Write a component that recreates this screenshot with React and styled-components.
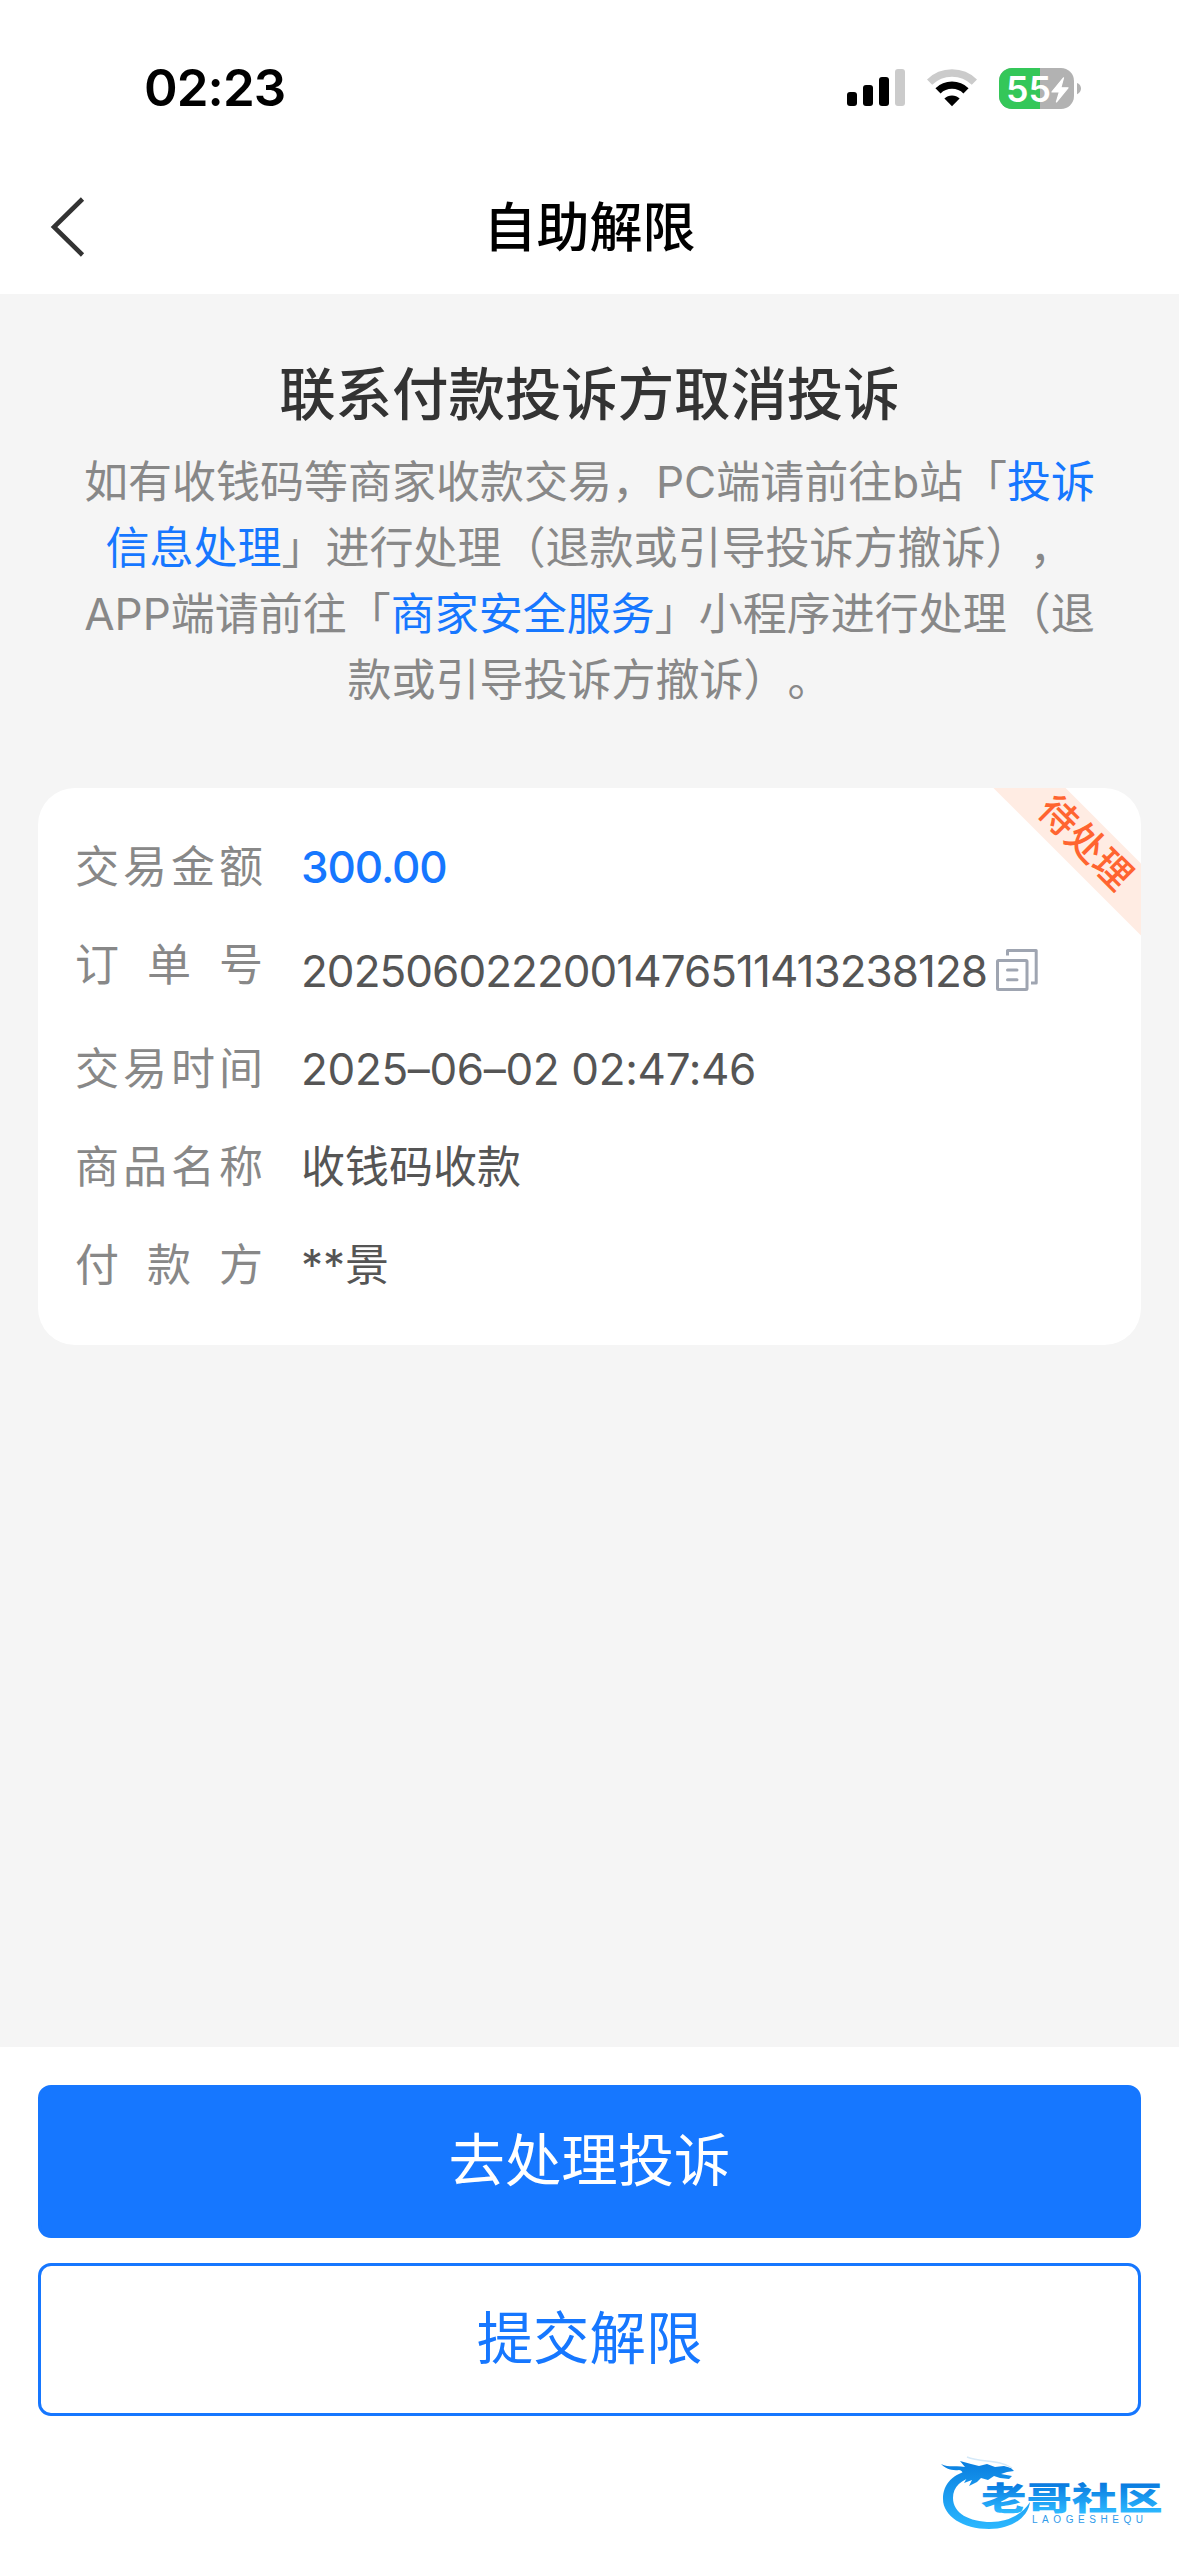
import React from "react";
import styled, { createGlobalStyle } from "styled-components";

const details = [
    { label: "交易金额", value: "300.00", highlight: true, tracking: -1.1 },
    {
        label: "订单号",
        value: "2025060222001476511413238128",
        copy: true,
        tracking: -0.97,
    },
    { label: "交易时间", value: "2025–06–02 02:47:46", tracking: -0.35 },
    { label: "商品名称", value: "收钱码收款" },
    { label: "付款方", value: "**景" },
];

const SignalIcon = () => (
    <svg width="58" height="38" viewBox="0 0 58 38">
        <rect x="0" y="23" width="10" height="14" rx="3" />
        <rect x="16" y="16" width="10" height="21" rx="3" />
        <rect x="32" y="8" width="10" height="29" rx="3" />
        <rect x="48" y="0" width="10" height="37" rx="3" fill="#cbcbcb" />
    </svg>
);

const WifiIcon = () => (
    <svg width="52" height="38" viewBox="0 0 52 38">
        <path
            d="M3.6 13.2A32 32 0 0 1 48.4 13.2"
            fill="none"
            stroke="#cbcbcb"
            strokeWidth="7.4"
        />
        <path
            d="M12 21.8A20.2 20.2 0 0 1 40 21.8"
            fill="none"
            stroke="#000"
            strokeWidth="7.4"
        />
        <path d="M26 37.2L18.4 29.6A10.8 10.8 0 0 1 33.6 29.6Z" />
    </svg>
);

const BatteryIcon = () => (
    <svg width="82" height="41" viewBox="0 0 82 41">
        <clipPath id="battery">
            <rect width="75" height="41" rx="13" />
        </clipPath>
        <g clipPath="url(#battery)">
            <rect width="75" height="41" fill="#b2b2b2" />
            <rect width="41" height="41" fill="#34c759" />
        </g>
        <path d="M78 15c2.4.8 4 3 4 5.6s-1.6 4.8-4 5.6z" fill="#b2b2b2" />
        <text
            x="7"
            y="34"
            fill="#fff"
            fontFamily="Inter"
            fontWeight="600"
            fontSize="35.5"
            textLength="45"
            lengthAdjust="spacingAndGlyphs">
            55
        </text>
        <path
            d="M64.5 9.8L53 24h7.4L57.4 34L69 19.8H61.8z"
            fill="#fff"
            stroke="#fff"
            strokeWidth="1.2"
            strokeLinejoin="round"
        />
    </svg>
);

const BackIcon = () => (
    <svg width="34" height="56" viewBox="0 0 34 56">
        <path
            d="M31.5 0L3 28L31.5 56"
            fill="none"
            stroke="#333"
            strokeWidth="4.6"
        />
    </svg>
);

const CopyIcon = () => (
    <svg width="42" height="42" viewBox="0 0 42 42" fill="none" stroke="#9fa5b1">
        <rect x="1.5" y="11.5" width="29.5" height="29" rx="1" strokeWidth="3" />
        <path
            d="M11.5 6.5V1.5H40.2V34H35"
            strokeWidth="3"
            strokeLinejoin="round"
        />
        <path d="M11.5 21H21M11.5 30.7H21" strokeWidth="3" strokeLinecap="round" />
    </svg>
);

const CommunityLogo = () => (
    <svg width="226" height="78" viewBox="0 0 226 78">
        <defs>
            <linearGradient id="ring" x1="0" y1="8" x2="0" y2="75" gradientUnits="userSpaceOnUse">
                <stop offset="0" stopColor="#0a7fe0" />
                <stop offset="1" stopColor="#2cb8ff" />
            </linearGradient>
            <linearGradient id="word" x1="0" y1="-27" x2="0" y2="3" gradientUnits="userSpaceOnUse">
                <stop offset="0" stopColor="#0878de" />
                <stop offset="1" stopColor="#2cb8ff" />
            </linearGradient>
        </defs>
        <g fill="url(#ring)">
            <path d="M31 16C12 19 2 30 2 45C2 62 22 75 48 75C70 75 87 64 89 48C81 61 66 68 50 68C28 68 12 59 12 44C12 33 20 25 35 22Z" />
            <path d="M0 10C8 14 16 11 24 13L19 7L30 10L38 12L46 10L54 13L63 12L70 14L73 17L66 18L60 20L71 22L68 25L59 24L53 22L47 26L40 24L36 28L28 32L31 26L23 29L27 22C19 22 24 17 18 16C10 17 4 14 0 10Z" />
        </g>
        <path d="M26 3C40 9 58 5 71 14" fill="none" stroke="#d5e9f8" strokeWidth="1.5" />
        <text
            transform="translate(40 55.5) scale(1.42 1)"
            fill="url(#word)"
            fontFamily="Noto Sans CJK SC"
            fontWeight="900"
            fontSize="32">
            老哥社区
        </text>
        <text
            x="91"
            y="69"
            fill="#2f9bea"
            fontFamily="Liberation Sans"
            fontSize="10"
            textLength="111">
            LAOGESHEQU
        </text>
    </svg>
);

const App = () => {
    return (
        <Page>
            <GlobalStyle />
            <StatusBar>
                <Clock>02:23</Clock>
                <StatusIcons>
                    <SignalIcon />
                    <WifiIcon />
                    <BatteryIcon />
                </StatusIcons>
            </StatusBar>
            <NavBar>
                <NavSide>
                    <BackIcon />
                </NavSide>
                <NavTitle>自助解限</NavTitle>
                <NavSide />
            </NavBar>
            <Content>
                <Heading>联系付款投诉方取消投诉</Heading>
                <Notice>
                    如有收钱码等商家收款交易，PC端请前往b站「<Anchor>投诉</Anchor>
                    <br />
                    <Anchor>信息处理</Anchor>」进行处理（退款或引导投诉方撤诉），
                    <br />
                    APP端请前往「<Anchor>商家安全服务</Anchor>」小程序进行处理（退
                    <br />
                    款或引导投诉方撤诉）。
                </Notice>
                <Card>
                    {details.map((item) => (
                        <Row key={item.label} $tall={item.copy}>
                            <Label>
                                {item.label.split("").map((char) => (
                                    <span key={char}>{char}</span>
                                ))}
                            </Label>
                            <Value
                                $highlight={item.highlight}
                                $lowered={item.copy}
                                $tracking={item.tracking}>
                                {item.value}
                                {item.copy && <CopyIcon />}
                            </Value>
                        </Row>
                    ))}
                    <Ribbon>待处理</Ribbon>
                </Card>
            </Content>
            <Footer>
                <ActionButton $primary>去处理投诉</ActionButton>
                <ActionButton>提交解限</ActionButton>
                <Watermark>
                    <CommunityLogo />
                </Watermark>
            </Footer>
        </Page>
    );
};

export default App;

const GlobalStyle = createGlobalStyle`
    * {
        box-sizing: border-box;
    }
    body {
        margin: 0;
        background: #fff;
    }
    svg {
        display: block;
        flex-shrink: 0;
        overflow: visible;
    }
`;

const Page = styled.div`
    display: flex;
    flex-direction: column;
    width: 1179px;
    height: 2556px;
    overflow: hidden;
    background: #fff;
    font-family: Inter, "Noto Sans CJK SC", sans-serif;
    text-spacing-trim: space-all;
`;

const StatusBar = styled.div`
    display: flex;
    justify-content: space-between;
    align-items: center;
    height: 176px;
    padding: 0 98px 0 144px;
`;

const Clock = styled.div`
    font-size: 51px;
    font-weight: 600;
    letter-spacing: -0.9px;
    line-height: 60px;
`;

const StatusIcons = styled.div`
    display: flex;
    align-items: center;
    gap: 21px;
`;

const NavBar = styled.div`
    display: flex;
    justify-content: space-between;
    align-items: center;
    height: 118px;
    padding: 0 51px 16px;
`;

const NavSide = styled.div`
    width: 34px;
`;

const NavTitle = styled.h1`
    margin: 2px 0 0;
    font-size: 53px;
    font-weight: 500;
    line-height: 60px;
`;

const Content = styled.div`
    flex: 1;
    padding: 61px 38px 0;
    background: #f5f5f5;
`;

const Heading = styled.h2`
    margin: 0;
    color: #333;
    font-size: 56.4px;
    font-weight: 500;
    line-height: 80px;
    text-align: center;
`;

const Notice = styled.p`
    margin: 14px 0 75px;
    color: #888;
    font-size: 44px;
    line-height: 66px;
    text-align: center;
    white-space: nowrap;
`;

const Anchor = styled.a`
    color: #1677ff;
`;

const Card = styled.div`
    position: relative;
    height: 557px;
    padding: 46px 37px 0;
    overflow: hidden;
    border-radius: 37px;
    background: #fff;
`;

const Row = styled.div`
    display: flex;
    gap: 38px;
    height: ${(props) => (props.$tall ? "104px" : "98px")};
    font-size: 44px;
    line-height: 66px;
`;

const Label = styled.div`
    display: flex;
    justify-content: space-between;
    width: 188px;
    color: #888;
`;

const Value = styled.div`
    display: flex;
    align-items: center;
    gap: 9px;
    height: 66px;
    margin-top: ${(props) => (props.$lowered ? "6px" : "0")};
    color: ${(props) => (props.$highlight ? "#1677ff" : "#555")};
    font-weight: ${(props) => (props.$highlight ? 500 : 400)};
    letter-spacing: ${(props) => props.$tracking || 0}px;
    svg {
        margin-top: -3px;
    }
`;

const Ribbon = styled.div`
    position: absolute;
    top: 30px;
    right: -94px;
    width: 300px;
    height: 51px;
    transform: rotate(45deg);
    background: #ffece3;
    color: #ff6430;
    font-size: 38px;
    font-weight: 500;
    line-height: 49px;
    text-align: center;
`;

const Footer = styled.div`
    display: flex;
    flex-direction: column;
    gap: 25px;
    height: 509px;
    padding: 38px 38px 0;
    background: #fff;
`;

const ActionButton = styled.button`
    height: 153px;
    flex-shrink: 0;
    padding: 0 0 10px;
    border: 3px solid #1677ff;
    border-radius: 13px;
    background: ${(props) => (props.$primary ? "#1677ff" : "#fff")};
    color: ${(props) => (props.$primary ? "#fff" : "#1677ff")};
    font-family: inherit;
    font-size: 56.4px;
`;

const Watermark = styled.div`
    display: flex;
    justify-content: flex-end;
    margin: 13px -26px 0 0;
`;
